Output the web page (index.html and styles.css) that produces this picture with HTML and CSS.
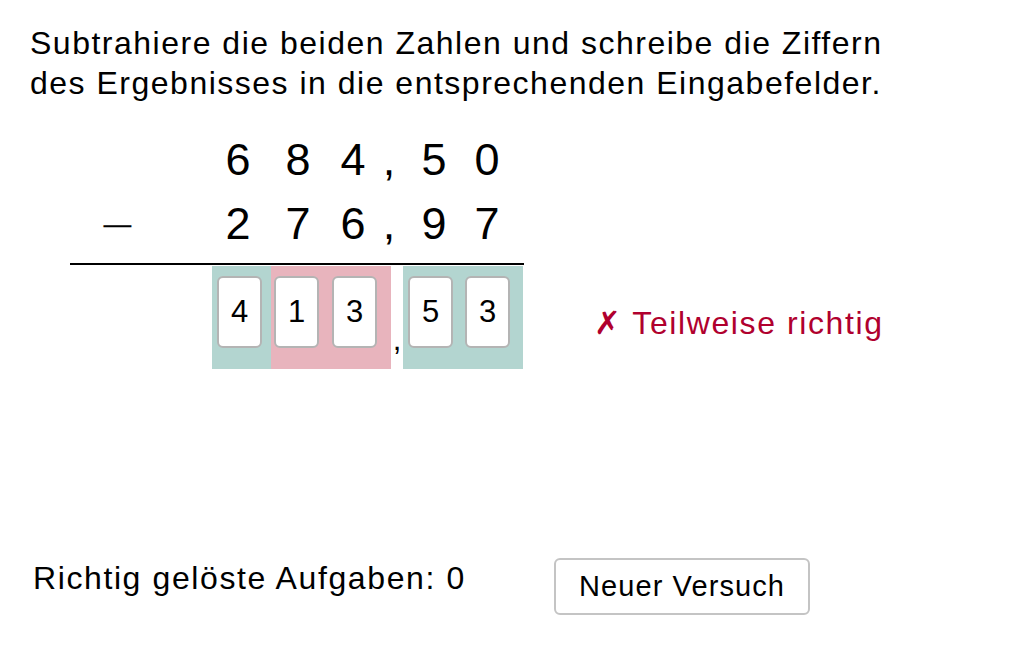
FILE: index.html
```html
<!DOCTYPE html>
<html lang="de">
<head>
<meta charset="utf-8">
<title>Subtraktion</title>
<link rel="stylesheet" href="styles.css">
</head>
<body>
<div class="page">
  <p class="task">Subtrahiere die beiden Zahlen und schreibe die Ziffern<br>des Ergebnisses in die entsprechenden Eingabefelder.</p>

  <div class="calc">
    <div class="row">
      <span class="op"></span>
      <span class="d">6</span><span class="d">8</span><span class="d">4</span><span class="d">,</span><span class="d">5</span><span class="d">0</span>
    </div>
    <div class="row row2">
      <span class="op"><span class="minus">−</span></span>
      <span class="d">2</span><span class="d">7</span><span class="d">6</span><span class="d">,</span><span class="d">9</span><span class="d">7</span>
    </div>
    <div class="rule"></div>
    <div class="result">
      <div class="answer">
        <div class="group ok g1"><div class="box">4</div></div>
        <div class="group bad g2"><div class="box">1</div><div class="box">3</div></div>
        <div class="comma">,</div>
        <div class="group ok g3"><div class="box">5</div><div class="box">3</div></div>
      </div>
      <div class="status"><span class="cross">✗</span> Teilweise richtig</div>
    </div>
  </div>

  <div class="footer">
    <div class="score">Richtig gelöste Aufgaben: 0</div>
    <button class="retry">Neuer Versuch</button>
  </div>
</div>
</body>
</html>
```
FILE: styles.css
```css
html, body {
  margin: 0;
  padding: 0;
  background: #ffffff;
}
body {
  font-family: "Liberation Sans", Arial, sans-serif;
  color: #000;
}
.page {
  width: 1032px;
  height: 645px;
  box-sizing: border-box;
  padding: 23px 0 0 30px;
  display: flex;
  flex-direction: column;
}
.task {
  margin: 0;
  font-size: 32px;
  line-height: 40px;
  letter-spacing: 1.5px;
}
.calc {
  margin-top: 25px;
  margin-left: 40px;
  display: flex;
  flex-direction: column;
}
.row {
  display: grid;
  grid-template-columns: 139px 58px 62px 48px 24px 66px 40px;
  font-size: 45px;
  line-height: 64px;
  height: 64px;
}
.row .d {
  text-align: center;
}
.op {
  padding-left: 31px;
  font-size: 48px;
}
.minus {
  display: inline-block;
  transform: scale(1.2, 0.6) translateY(4px);
  transform-origin: left center;
}
.rule {
  width: 454px;
  height: 2px;
  background: #000;
  margin-top: 7px;
}
.result {
  display: flex;
  align-items: center;
  margin-top: 1px;
}
.answer {
  display: flex;
  margin-left: 142px;
  height: 103px;
}
.group {
  display: flex;
  align-items: flex-start;
  padding-top: 10px;
  box-sizing: border-box;
  height: 103px;
}
.ok { background: #b3d5d0; }
.bad { background: #e8b4bd; }
.g1 { width: 59px; padding-left: 5px; }
.g2 { width: 120px; padding-left: 3px; gap: 13px; }
.g3 { width: 120px; padding-left: 5px; gap: 12px; }
.box {
  width: 45px;
  height: 72px;
  box-sizing: border-box;
  background: #fff;
  border: 2px solid #b4b4b4;
  border-radius: 6px;
  display: flex;
  align-items: center;
  justify-content: center;
  font-size: 31px;
}
.comma {
  width: 12px;
  font-size: 31px;
  line-height: 31px;
  padding-top: 58px;
  text-align: center;
}
.status {
  margin-left: 71px;
  margin-top: 10px;
  font-size: 32px;
  letter-spacing: 1.6px;
  color: #b0002e;
}
.cross {
  font-family: "DejaVu Sans", sans-serif;
  font-weight: bold;
}
.footer {
  display: flex;
  align-items: flex-start;
  margin-top: 189px;
  margin-left: 3px;
}
.score {
  font-size: 32px;
  letter-spacing: 1.6px;
  width: 521px;
  padding-top: 2px;
}
.retry {
  font-family: "Liberation Sans", Arial, sans-serif;
  font-size: 29px;
  letter-spacing: 1.1px;
  color: #000;
  background: #fff;
  border: 2px solid #c4c4c4;
  border-radius: 6px;
  width: 256px;
  height: 57px;
  padding: 0;
}
```
